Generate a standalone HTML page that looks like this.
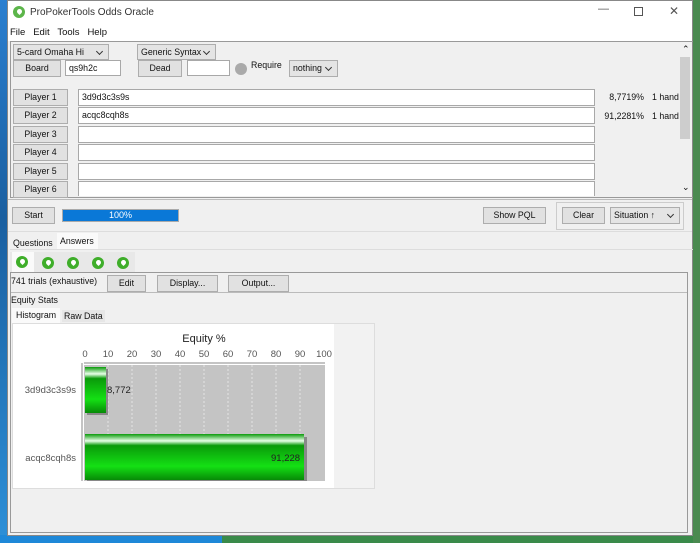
<!DOCTYPE html>
<html><head><style>
*{box-sizing:border-box;margin:0;padding:0}
body{width:700px;height:543px;overflow:hidden;position:relative;background:#3a8a4a;font-family:"Liberation Sans",sans-serif;font-size:8.8px;color:#111}
.a{position:absolute}
.btn{position:absolute;background:#e1e1e1;border:1px solid #adadad;text-align:center;line-height:15px;font-size:8.8px}
.inp{position:absolute;background:#fff;border:1px solid #a8a8a8;padding-left:3px;line-height:15px}
.cmb{position:absolute;background:#e4e4e4;border:1px solid #adadad;padding-left:3px;line-height:14px}
.cmb:after{content:"";position:absolute;right:6px;top:4px;width:4px;height:4px;border-right:1px solid #333;border-bottom:1px solid #333;transform:rotate(45deg)}
.drop{position:absolute;width:12px;height:12px;border-radius:50%;background:#3fae2a}
.drop:after{content:"";position:absolute;left:3.5px;top:3px;width:5px;height:5px;border-radius:50% 50% 50% 0;transform:rotate(-45deg);background:#fff}
</style></head><body>
<div class="a" style="left:0;top:0;width:7px;height:543px;background:linear-gradient(#2a7fd0,#1a5fa0 40%,#2d90d8)"></div>
<div class="a" style="left:0;top:535px;width:222px;height:8px;background:#1e88d8"></div>
<div class="a" style="left:693px;top:0;width:7px;height:543px;background:#4a8a50"></div>
<div class="a" style="left:7px;top:0;width:686px;height:536px;background:#f0f0f0;border:1px solid #888"></div>
<div class="a" style="left:8px;top:1px;width:684px;height:40px;background:#fff"></div>
<div class="drop" style="left:13px;top:6px;background:#5cb54a"></div>
<div class="a" style="left:30px;top:7px;font-size:10px;color:#333">ProPokerTools Odds Oracle</div>
<div class="a" style="left:598px;top:3px;font-size:11px;color:#555">—</div>
<div class="a" style="left:634px;top:7px;width:9px;height:9px;border:1px solid #555"></div>
<div class="a" style="left:669px;top:4px;font-size:12px;color:#555">✕</div>
<div class="a" style="left:10px;top:27px;font-size:9.5px">File&nbsp;&nbsp; Edit&nbsp;&nbsp; Tools&nbsp;&nbsp; Help</div>
<div class="a" style="left:10px;top:41px;width:683px;height:157px;border:1px solid #999;border-right:none"></div>
<div class="cmb" style="left:13px;top:44px;width:96px;height:16px">5-card Omaha Hi</div>
<div class="cmb" style="left:137px;top:44px;width:79px;height:16px">Generic Syntax</div>
<div class="btn" style="left:13px;top:60px;width:48px;height:17px">Board</div>
<div class="inp" style="left:65px;top:60px;width:56px;height:16px">qs9h2c</div>
<div class="btn" style="left:138px;top:60px;width:44px;height:17px">Dead</div>
<div class="inp" style="left:187px;top:60px;width:43px;height:16px"></div>
<div class="a" style="left:235px;top:63px;width:12px;height:12px;border-radius:50%;background:#aaa"></div>
<div class="a" style="left:251px;top:60px">Require</div>
<div class="cmb" style="left:289px;top:60px;width:49px;height:17px;line-height:15px">nothing</div>
<div class="btn" style="left:13px;top:89px;width:55px;height:17px">Player 1</div>
<div class="btn" style="left:13px;top:107px;width:55px;height:17px">Player 2</div>
<div class="btn" style="left:13px;top:126px;width:55px;height:17px">Player 3</div>
<div class="btn" style="left:13px;top:144px;width:55px;height:17px">Player 4</div>
<div class="btn" style="left:13px;top:163px;width:55px;height:17px">Player 5</div>
<div class="btn" style="left:13px;top:181px;width:55px;height:17px">Player 6</div>
<div class="inp" style="left:78px;top:89px;width:517px;height:17px">3d9d3c3s9s</div>
<div class="inp" style="left:78px;top:107px;width:517px;height:17px">acqc8cqh8s</div>
<div class="inp" style="left:78px;top:126px;width:517px;height:17px"></div>
<div class="inp" style="left:78px;top:144px;width:517px;height:17px"></div>
<div class="inp" style="left:78px;top:163px;width:517px;height:17px"></div>
<div class="inp" style="left:78px;top:181px;width:517px;height:15px;border-bottom:none"></div>
<div class="a" style="left:598px;top:92px;width:46px;text-align:right">8,7719%</div>
<div class="a" style="left:598px;top:111px;width:46px;text-align:right">91,2281%</div>
<div class="a" style="left:652px;top:92px">1 hand</div>
<div class="a" style="left:652px;top:111px">1 hand</div>
<div class="a" style="left:679px;top:43px;width:13px;height:153px;background:#f0f0f0"></div>
<div class="a" style="left:680px;top:57px;width:10px;height:82px;background:#cdcdcd"></div>
<div class="a" style="left:682px;top:44px;font-size:9px">⌃</div>
<div class="a" style="left:682px;top:182px;font-size:9px">⌄</div>
<div class="a" style="left:8px;top:199px;width:684px;height:1px;background:#bbb"></div>
<div class="btn" style="left:12px;top:207px;width:43px;height:17px">Start</div>
<div class="a" style="left:62px;top:209px;width:117px;height:13px;background:#0a78d7;border:1px solid #aaa;color:#fff;text-align:center;line-height:11px;font-size:9px">100%</div>
<div class="btn" style="left:483px;top:207px;width:63px;height:17px">Show PQL</div>
<div class="a" style="left:556px;top:202px;width:128px;height:28px;border:1px solid #ccc"></div>
<div class="btn" style="left:562px;top:207px;width:43px;height:17px">Clear</div>
<div class="cmb" style="left:610px;top:207px;width:70px;height:17px;line-height:15px">Situation ↑</div>
<div class="a" style="left:8px;top:231px;width:684px;height:1px;background:#ddd"></div>
<div class="a" style="left:13px;top:238px">Questions</div>
<div class="a" style="left:57px;top:233px;width:41px;height:16px;background:#fafafa;padding:3px 3px">Answers</div>
<div class="a" style="left:10px;top:249px;width:683px;height:1px;background:#ddd"></div>
<div class="a" style="left:10px;top:252px;width:125px;height:20px;background:#e8e8e8"></div>
<div class="a" style="left:12px;top:252px;width:22px;height:20px;background:#fafafa"></div>
<div class="drop" style="left:16px;top:256px"></div>
<div class="drop" style="left:42px;top:257px"></div>
<div class="drop" style="left:67px;top:257px"></div>
<div class="drop" style="left:92px;top:257px"></div>
<div class="drop" style="left:117px;top:257px"></div>
<div class="a" style="left:10px;top:272px;width:678px;height:261px;border:1px solid #999"></div>
<div class="a" style="left:11px;top:273px;width:676px;height:20px;border-bottom:1px solid #bbb"></div>
<div class="a" style="left:11px;top:276px">741 trials (exhaustive)</div>
<div class="btn" style="left:107px;top:275px;width:39px;height:17px">Edit</div>
<div class="btn" style="left:157px;top:275px;width:61px;height:17px">Display...</div>
<div class="btn" style="left:228px;top:275px;width:61px;height:17px">Output...</div>
<div class="a" style="left:11px;top:295px">Equity Stats</div>
<div class="a" style="left:12px;top:308px;width:48px;height:15px;background:#fafafa;padding:2px 4px">Histogram</div>
<div class="a" style="left:62px;top:310px;background:#e6e6e6;padding:1px 2px">Raw Data</div>
<div class="a" style="left:12px;top:323px;width:363px;height:166px;background:#fff;border:1px solid #ddd"></div>
<div class="a" style="left:334px;top:324px;width:40px;height:164px;background:#f2f2f2"></div>
<svg class="a" style="left:0;top:0" width="700" height="543">
<defs><linearGradient id="g" x1="0" y1="0" x2="0" y2="1"><stop offset="0" stop-color="#0a9a0a"/><stop offset=".15" stop-color="#e8ffe8"/><stop offset=".25" stop-color="#0a9a0a"/><stop offset=".7" stop-color="#14e014"/><stop offset="1" stop-color="#078a07"/></linearGradient></defs>
<text x="204" y="342" font-size="11" text-anchor="middle" font-family="Liberation Sans" fill="#222">Equity %</text>
<g font-size="9.5" font-family="Liberation Sans" fill="#555" text-anchor="middle">
<text x="85" y="357">0</text><text x="108" y="357">10</text><text x="132" y="357">20</text><text x="156" y="357">30</text><text x="180" y="357">40</text><text x="204" y="357">50</text><text x="228" y="357">60</text><text x="252" y="357">70</text><text x="276" y="357">80</text><text x="300" y="357">90</text><text x="324" y="357">100</text></g>
<rect x="84" y="365" width="241" height="116" fill="#c4c4c4"/>
<g stroke="#e4e4e4" stroke-dasharray="2,2"><line x1="108" y1="365" x2="108" y2="481"/><line x1="132" y1="365" x2="132" y2="481"/><line x1="156" y1="365" x2="156" y2="481"/><line x1="180" y1="365" x2="180" y2="481"/><line x1="204" y1="365" x2="204" y2="481"/><line x1="228" y1="365" x2="228" y2="481"/><line x1="252" y1="365" x2="252" y2="481"/><line x1="276" y1="365" x2="276" y2="481"/><line x1="300" y1="365" x2="300" y2="481"/></g>
<line x1="82" y1="363" x2="82" y2="481" stroke="#888"/>
<line x1="84" y1="363" x2="325" y2="363" stroke="#888"/>
<rect x="87" y="369" width="21" height="46" fill="#888"/>
<rect x="85" y="367" width="21" height="46" fill="url(#g)"/>
<rect x="87" y="437" width="220" height="44" fill="#888"/>
<rect x="85" y="434" width="219" height="46" fill="url(#g)"/>
<g font-size="9.5" font-family="Liberation Sans" fill="#222"><text x="107" y="393">8,772</text><text x="271" y="461">91,228</text></g>
<g font-size="9.5" font-family="Liberation Sans" fill="#555" text-anchor="end"><text x="76" y="393">3d9d3c3s9s</text><text x="76" y="461">acqc8cqh8s</text></g>
</svg>
</body></html>
